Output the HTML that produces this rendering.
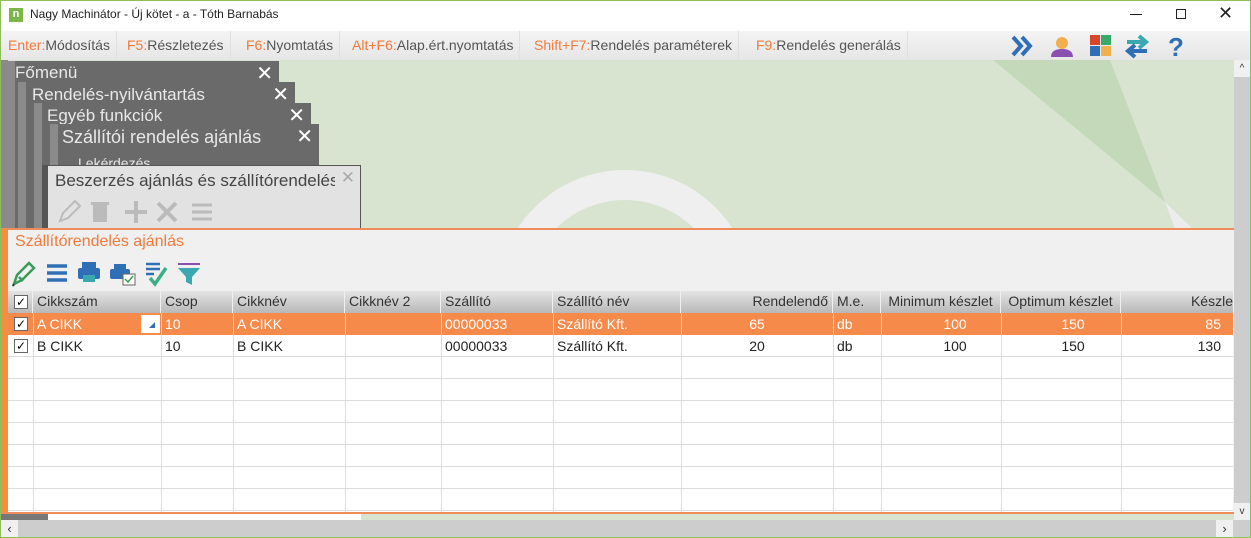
<!DOCTYPE html>
<html><head><meta charset="utf-8"><style>
*{margin:0;padding:0;box-sizing:border-box}
body{width:1251px;height:538px;overflow:hidden;font-family:"Liberation Sans",sans-serif;background:#fff;position:relative}
.abs{position:absolute}
#frame{left:0;top:0;width:1251px;height:538px;border:1px solid #8cbf5c}
.tb span{color:#f07a3a}
.tb{font-size:14px;color:#555;white-space:nowrap}
.tbi{position:absolute;top:0;height:29px;line-height:29px;padding:0 6px;border-right:1px solid #e0e0e0}
.stk{background:#6a6a6a;color:#e8e8e8;font-size:17px;border-left:8px solid #8a8a8a}
.stk .x{position:absolute;right:6px;top:0;font-size:20px;color:#fff}
.col{position:absolute;top:0;height:100%;border-left:1px solid #dcdcdc}
.hd{position:absolute;top:291px;height:22px;line-height:21px;font-size:14px;color:#333;background:linear-gradient(#e4e4e4,#b8b8b8);border-right:1px solid #f0f0f0;padding:0 4px;white-space:nowrap;overflow:hidden}
.c{position:absolute;height:22px;line-height:22px;font-size:14px;padding:0 4px;white-space:nowrap}
.r1{color:#fff}.r2{color:#222}
.chk{position:absolute;width:14px;height:14px;border:1px solid #666;background:#fff;font-size:12px;line-height:12px;text-align:center;color:#000}
</style></head><body>
<div class="abs" style="left:0;top:0;width:1251px;height:31px;background:#fff"></div>
<div class="abs" style="left:9px;top:8px;width:14px;height:14px;background:#7ab648;color:#fff;font-size:11px;font-weight:bold;line-height:13px;text-align:center">n</div>
<div class="abs" style="left:30px;top:7px;font-size:12px;color:#222">Nagy Machinátor - Új kötet - a - Tóth Barnabás</div>
<div class="abs" style="left:1130px;top:14px;width:12px;height:1px;background:#222"></div>
<div class="abs" style="left:1176px;top:9px;width:10px;height:10px;border:1px solid #222"></div>
<div class="abs" style="left:1218px;top:3px;font-size:18px;color:#222">✕</div>
<div class="abs tb" style="left:1px;top:31px;width:1249px;height:29px;background:linear-gradient(#f4f4f4,#e6e6e6)">
<div class="tbi" style="left:1px"><span>Enter:</span>Módosítás</div>
<div class="tbi" style="left:120px"><span>F5:</span>Részletezés</div>
<div class="tbi" style="left:239px"><span>F6:</span>Nyomtatás</div>
<div class="tbi" style="left:345px"><span>Alt+F6:</span>Alap.ért.nyomtatás</div>
<div class="tbi" style="left:527px"><span>Shift+F7:</span>Rendelés paraméterek</div>
<div class="tbi" style="left:749px"><span>F9:</span>Rendelés generálás</div>
</div>
<svg class="abs" style="left:1005px;top:32px" width="190" height="28">
<path d="M8 5l8 9-8 9M17 5l8 9-8 9" stroke="#2f6fb5" stroke-width="4" fill="none"/>
<circle cx="57" cy="11" r="6" fill="#f0b050"/><path d="M46 25q0-8 11-8t11 8z" fill="#8b4fb0"/>
<rect x="85" y="3" width="10" height="10" fill="#d9452b"/><rect x="96" y="3" width="10" height="10" fill="#3aa86b"/><rect x="85" y="14" width="10" height="10" fill="#2f6fb5"/><rect x="96" y="14" width="10" height="10" fill="#f0b050"/>
<path d="M122 10h18M134 4l7 6-7 6" stroke="#3aa8b0" stroke-width="4" fill="none"/><path d="M142 19h-18M130 13l-7 6 7 6" stroke="#2f6fb5" stroke-width="4" fill="none"/>
<text x="163" y="24" font-family="Liberation Sans" font-weight="bold" font-size="26" fill="#2f6fb5">?</text>
</svg>
<div class="abs" style="left:1px;top:60px;width:1233px;height:169px;background:#d8e3d0;overflow:hidden">
<svg width="1233" height="169" style="position:absolute;left:0;top:0">
<polygon points="992,0 1109,0 1164,142" fill="#c4d9ba"/>
<polygon points="1164,142 1192,169 1174,169" fill="#ececec"/>
<circle cx="624" cy="238" r="113" fill="none" stroke="#efefef" stroke-width="30"/>
</svg>
</div>
<div class="abs" style="left:1px;top:60px;width:7px;height:170px;background:#8a8a8a"></div>
<div class="abs stk" style="left:7px;top:61px;width:272px;height:170px"><div style="position:absolute;left:0;top:2px">Főmenü</div><div class="x">✕</div></div>
<div class="abs stk" style="left:18px;top:82px;width:277px;height:150px"><div style="position:absolute;left:6px;top:3px">Rendelés-nyilvántartás</div><div class="x">✕</div></div>
<div class="abs stk" style="left:34px;top:103px;width:277px;height:130px"><div style="position:absolute;left:5px;top:3px">Egyéb funkciók</div><div class="x">✕</div></div>
<div class="abs stk" style="left:50px;top:124px;width:269px;height:110px;font-size:18px"><div style="position:absolute;left:4px;top:3px">Szállítói rendelés ajánlás</div><div class="x">✕</div><div style="position:absolute;left:20px;top:31px;font-size:14px">Lekérdezés</div></div>
<div class="abs" style="left:42px;top:165px;width:319px;height:64px;background:#e2e2e2;border:1px solid #555;border-left:6px solid #555">
<div style="position:absolute;left:7px;top:5px;font-size:17px;color:#444;white-space:nowrap;width:280px;overflow:hidden">Beszerzés ajánlás és szállítórendelés</div>
<div style="position:absolute;right:5px;top:2px;font-size:17px;color:#aaa">✕</div>
<svg style="position:absolute;left:8px;top:33px" width="160" height="26"><path d="M4 22l3-8 12-12 5 5-12 12z" fill="none" stroke="#bbb" stroke-width="2"/><rect x="37" y="6" width="14" height="17" fill="#bbb"/><rect x="35" y="3" width="18" height="3" fill="#bbb"/><path d="M80 2v22M69 13h22" stroke="#bbb" stroke-width="4"/><path d="M102 4l18 18M120 4l-18 18" stroke="#bbb" stroke-width="4"/><path d="M136 6h20M136 13h20M136 20h20" stroke="#bbb" stroke-width="3"/></svg>
</div>
<div class="abs" style="left:1px;top:228px;width:1233px;height:2px;background:#ef8a5a"></div>
<div class="abs" style="left:1px;top:230px;width:1233px;height:283px;background:#f0f0f0"></div>
<div class="abs" style="left:1px;top:229px;width:7px;height:285px;background:#f39040"></div>
<div class="abs" style="left:15px;top:233px;font-size:16px;color:#f07a3a">Szállítórendelés ajánlás</div>
<svg class="abs" style="left:10px;top:258px" width="200" height="30">
<path d="M4 26l3-9 12-12 5 5-12 12z M9 19l4 4" fill="none" stroke="#3a9a5a" stroke-width="2.5"/><path d="M4 26l-1 2" stroke="#333" stroke-width="2"/>
<path d="M37 8h20M37 15h20M37 22h20" stroke="#2f6fb5" stroke-width="3.5"/>
<rect x="72" y="4" width="14" height="6" fill="#2f6fb5"/><rect x="68" y="10" width="22" height="11" rx="2" fill="#2f6fb5"/><rect x="73" y="17" width="12" height="7" fill="#3aa8b0"/>
<rect x="104" y="6" width="12" height="5" fill="#2f6fb5"/><rect x="100" y="11" width="20" height="10" rx="2" fill="#2f6fb5"/><rect x="113" y="16" width="12" height="11" fill="#fff" stroke="#666"/><path d="M115 21l3 3 5-6" stroke="#3a9a5a" fill="none" stroke-width="1.5"/>
<path d="M136 6h14M136 11h14M136 16h8" stroke="#2f6fb5" stroke-width="2.5"/><path d="M140 20l5 6 11-16" stroke="#3ab08a" stroke-width="3.5" fill="none"/>
<path d="M168 6h22" stroke="#8b4fb0" stroke-width="2"/><path d="M168 10h22l-8 9v8l-6-3v-5z" fill="#3aa8b0"/>
</svg>
<div class="abs" style="left:8px;top:313px;width:1225px;height:199px;background:#fff;overflow:hidden">
<div style="position:absolute;left:0;top:0;width:1225px;height:22px;background:#f58a4b"></div>
<div style="position:absolute;left:0;top:22px;width:1225px;height:177px;background:repeating-linear-gradient(#fff 0 21px,#dcdcdc 21px 22px)"></div>
<div class="col" style="left:25px"></div><div class="col" style="left:153px"></div><div class="col" style="left:225px"></div><div class="col" style="left:337px"></div><div class="col" style="left:433px"></div><div class="col" style="left:545px"></div><div class="col" style="left:673px"></div><div class="col" style="left:825px"></div><div class="col" style="left:873px"></div><div class="col" style="left:993px"></div><div class="col" style="left:1113px"></div>
</div>
<div class="hd" style="left:8px;width:25px"></div>
<div class="hd" style="left:33px;width:128px">Cikkszám</div>
<div class="hd" style="left:161px;width:72px">Csop</div>
<div class="hd" style="left:233px;width:112px">Cikknév</div>
<div class="hd" style="left:345px;width:96px">Cikknév 2</div>
<div class="hd" style="left:441px;width:112px">Szállító</div>
<div class="hd" style="left:553px;width:128px">Szállító név</div>
<div class="hd" style="left:681px;width:152px;text-align:right">Rendelendő</div>
<div class="hd" style="left:833px;width:48px">M.e.</div>
<div class="hd" style="left:881px;width:120px;text-align:center">Minimum készlet</div>
<div class="hd" style="left:1001px;width:120px;text-align:center">Optimum készlet</div>
<div class="hd" style="left:1121px;width:113px;text-align:right;padding-right:0">Készle</div>
<div class="chk" style="left:14px;top:295px">✓</div>
<div class="chk" style="left:14px;top:317px">✓</div>
<div class="chk" style="left:14px;top:339px">✓</div>
<div class="abs" style="left:141px;top:315px;width:19px;height:18px;background:#fff"><svg width="19" height="18"><path d="M8 13h6v-6z" fill="#2f6fb5"/></svg></div>
<div class="c r1" style="left:33px;top:313px">A CIKK</div><div class="c r1" style="left:161px;top:313px">10</div><div class="c r1" style="left:233px;top:313px">A CIKK</div><div class="c r1" style="left:441px;top:313px">00000033</div><div class="c r1" style="left:553px;top:313px">Szállító Kft.</div>
<div class="c r1" style="left:681px;top:313px;width:152px;text-align:center">65</div><div class="c r1" style="left:833px;top:313px">db</div><div class="c r1" style="left:881px;top:313px;width:148px;text-align:center">100</div><div class="c r1" style="left:1001px;top:313px;width:144px;text-align:center">150</div><div class="c r1" style="left:1121px;top:313px;width:104px;text-align:right">85</div>
<div class="c r2" style="left:33px;top:335px">B CIKK</div><div class="c r2" style="left:161px;top:335px">10</div><div class="c r2" style="left:233px;top:335px">B CIKK</div><div class="c r2" style="left:441px;top:335px">00000033</div><div class="c r2" style="left:553px;top:335px">Szállító Kft.</div>
<div class="c r2" style="left:681px;top:335px;width:152px;text-align:center">20</div><div class="c r2" style="left:833px;top:335px">db</div><div class="c r2" style="left:881px;top:335px;width:148px;text-align:center">100</div><div class="c r2" style="left:1001px;top:335px;width:144px;text-align:center">150</div><div class="c r2" style="left:1121px;top:335px;width:104px;text-align:right">130</div>
<div class="abs" style="left:1px;top:512px;width:1233px;height:2px;background:#ef8a5a"></div>
<div class="abs" style="left:1px;top:514px;width:360px;height:6px;background:#fff"></div>
<div class="abs" style="left:1px;top:514px;width:47px;height:6px;background:#777"></div>
<div class="abs" style="left:361px;top:514px;width:873px;height:6px;background:#d8e3d0"></div>
<div class="abs" style="left:1px;top:520px;width:1249px;height:17px;background:#cdcdcd"></div>
<div class="abs" style="left:1px;top:520px;width:17px;height:17px;background:#f0f0f0;font-size:13px;text-align:center;line-height:17px;color:#333">‹</div>
<div class="abs" style="left:1216px;top:520px;width:17px;height:17px;background:#f0f0f0;font-size:13px;text-align:center;line-height:17px;color:#333">›</div>
<div class="abs" style="left:1234px;top:60px;width:16px;height:460px;background:#cdcdcd"></div>
<div class="abs" style="left:1234px;top:60px;width:16px;height:17px;background:#f0f0f0;font-size:10px;text-align:center;line-height:17px;color:#333">^</div>
<div class="abs" style="left:1234px;top:503px;width:16px;height:17px;background:#f0f0f0;font-size:10px;text-align:center;line-height:17px;color:#333">v</div>
<div class="abs" id="frame"></div>
</body></html>
